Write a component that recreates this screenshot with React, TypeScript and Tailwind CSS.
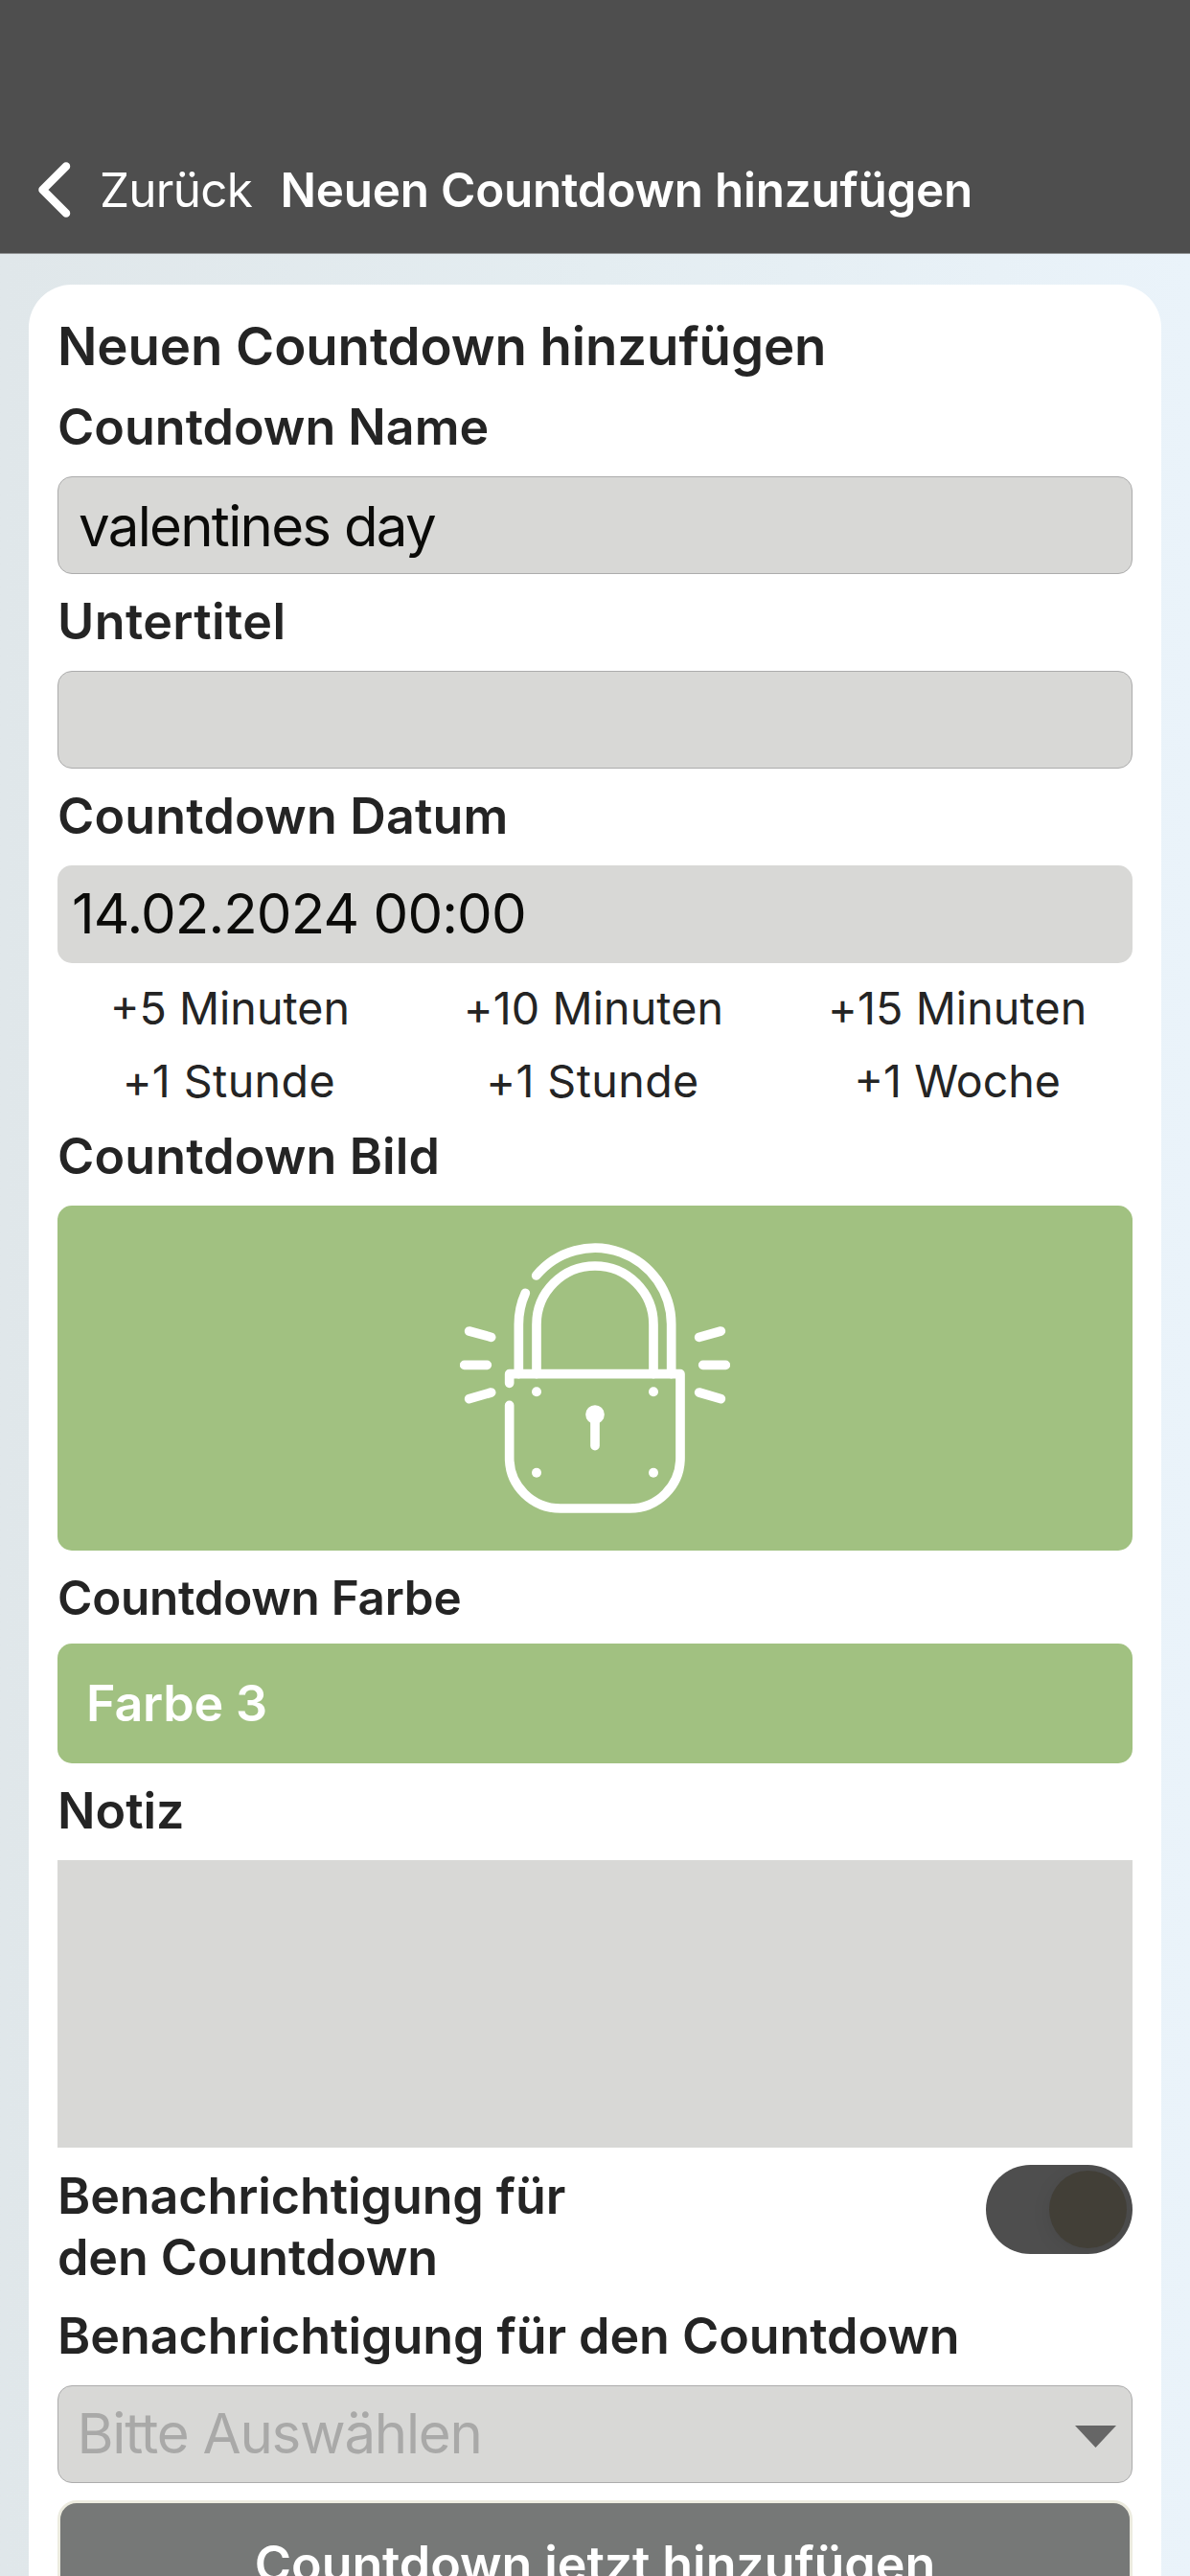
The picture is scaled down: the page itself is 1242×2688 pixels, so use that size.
import React, { useState } from 'react';

const quickSteps = [
  { label: '+5 Minuten', className: '' },
  { label: '+10 Minuten', className: 'tracking-[0.1px]' },
  { label: '+15 Minuten', className: 'tracking-[0.1px]' },
  { label: '+1 Stunde', className: 'tracking-[0.4px] pr-0.5' },
  { label: '+1 Stunde', className: 'tracking-[0.4px] pr-0.5' },
  { label: '+1 Woche', className: '' }
];

const FieldLabel: React.FC<{ children: React.ReactNode; className?: string }> = ({ children, className = '' }) => (
  <label className={`block mt-3.5 mb-[15px] text-[52px] leading-[72px] font-semibold ${className}`}>{children}</label>
);

const LockIcon: React.FC = () => (
  <svg
    viewBox="60 110 846 846"
    className="w-[282px] h-[282px]"
    fill="none"
    stroke="white"
    strokeWidth="29"
    strokeLinecap="round"
    strokeLinejoin="round"
  >
    {/* Shackle */}
    <path d="M722 520V365A239 239 0 0 0 299 212" />
    <path d="M265 267A239 239 0 0 0 244 365V520" />
    <path d="M300 520V365A183 183 0 0 1 666 365V520" />
    {/* Body */}
    <path d="M215 549V520H750V783A158 158 0 0 1 592 941H375A160 158 0 0 1 215 783V618" />
    {/* Rays */}
    <path d="M89 386L158 405M74 492H145M89 598L158 578" />
    <path d="M809 405L877 386M821 492H892M809 578L877 598" />
    {/* Keyhole and rivets */}
    <path d="M483 655V745" />
    <g fill="white" stroke="none">
      <circle cx="483" cy="647" r="29.5" />
      <circle cx="300" cy="576" r="15" />
      <circle cx="666" cy="576" r="15" />
      <circle cx="300" cy="829" r="15" />
      <circle cx="666" cy="829" r="15" />
    </g>
  </svg>
);

const App: React.FC = () => {
  const [name, setName] = useState('valentines day');
  const [subtitle, setSubtitle] = useState('');
  const [note, setNote] = useState('');
  const [notify, setNotify] = useState(true);

  return (
    <div className="h-[2688px] flex flex-col overflow-hidden bg-gradient-to-r from-[#e0e7ea] via-[#e4edf1] to-[#eaf3fa] font-['Inter','Liberation_Sans',sans-serif] text-[#242424]">
      {/* Header */}
      <header className="shrink-0 h-[265px] pt-[162px] pl-10 flex items-start bg-[#4e4e4e] border-b border-[#8f9192] text-white text-[49.4px] leading-[72px]">
        <button className="flex items-center w-[252.5px]">
          <svg viewBox="0 0 34 58" className="w-[34px] h-[58px] mr-[30px]" fill="none">
            <path d="M29 4.5L4.5 29L29 53.5" stroke="white" strokeWidth="8.5" strokeLinecap="round" strokeLinejoin="round" />
          </svg>
          <span className="tracking-[-0.7px]">Zurück</span>
        </button>
        <span className="font-semibold tracking-[-0.22px]">Neuen Countdown hinzufügen</span>
      </header>

      {/* Form card */}
      <main className="shrink-0 mt-8 mx-[30px] px-[30px] pt-[27px] pb-[30px] bg-white rounded-t-[45px]">
        <h1 className="text-[54.6px] leading-[74px] font-semibold tracking-[-0.1px] -mb-0.5">Neuen Countdown hinzufügen</h1>

        <FieldLabel>Countdown Name</FieldLabel>
        <input
          value={name}
          onChange={(e) => setName(e.target.value)}
          className="block w-full h-[102px] pl-[21px] pt-0.5 rounded-[15px] border border-[#acacac] bg-[#d8d8d6] text-[58.2px] tracking-[-1.73px] text-[#0b0b09] outline-none"
        />

        <FieldLabel className="tracking-[0.4px]">Untertitel</FieldLabel>
        <input
          value={subtitle}
          onChange={(e) => setSubtitle(e.target.value)}
          className="block w-full h-[102px] pl-[21px] rounded-[15px] border border-[#acacac] bg-[#d8d8d6] text-[58.2px] outline-none"
        />

        <FieldLabel className="tracking-[0.18px]">Countdown Datum</FieldLabel>
        <div className="h-[102px] pl-[15px] flex items-center rounded-[15px] bg-[#d8d8d6] text-[58.2px] tracking-[-0.88px] text-[#0b0b09]">
          14.02.2024 00:00
        </div>

        <div className="grid grid-cols-3 -ml-2.5 -mr-[7px] mt-[9px] -mb-[9px] text-center text-[46.6px] leading-[76px]">
          {quickSteps.map((step, index) => (
            <button key={index} className={step.className}>{step.label}</button>
          ))}
        </div>

        <FieldLabel className="tracking-[0.13px]">Countdown Bild</FieldLabel>
        <div className="h-[360px] flex items-center justify-center rounded-[15px] bg-[#a1c181]">
          <LockIcon />
        </div>

        <label className="block mt-[13px] mb-3 text-[49.4px] leading-[72px] font-semibold tracking-[-0.24px]">Countdown Farbe</label>
        <div className="h-[125px] pl-[30px] flex items-center rounded-[15px] bg-[#a1c181] text-[52px] font-semibold tracking-[-0.2px] text-white">
          Farbe 3
        </div>

        <FieldLabel>Notiz</FieldLabel>
        <textarea
          value={note}
          onChange={(e) => setNote(e.target.value)}
          className="block w-full h-[300px] resize-none bg-[#d8d8d6] outline-none"
        />

        {/* Notification toggle */}
        <div className="flex items-start justify-between mt-[18px]">
          <p className="w-[560px] mt-px text-[52px] leading-[64px] font-semibold tracking-[-0.1px]">Benachrichtigung für den Countdown</p>
          <button
            onClick={() => setNotify(!notify)}
            className={`w-[153px] h-[93px] p-1.5 flex overflow-hidden rounded-full bg-[#4e4e4e] ${notify ? 'justify-end' : 'justify-start'}`}
          >
            <span className="w-[81px] h-[81px] rounded-full bg-[#423f37] shadow-[0_4px_20px_rgba(0,0,0,0.08)]"></span>
          </button>
        </div>

        <FieldLabel className="tracking-[-0.06px]">Benachrichtigung für den Countdown</FieldLabel>
        <div className="h-[102px] pl-[19.5px] pr-4 flex items-center justify-between rounded-[15px] border border-[#acacac] bg-[#d8d8d6] text-[58.2px] tracking-[-1.25px] text-[#a9a9a8]">
          <span>Bitte Auswählen</span>
          <svg viewBox="0 0 43 23" className="w-[43px] h-[23px] mt-1" fill="#666666">
            <path d="M0 0H43L21.5 23Z" />
          </svg>
        </div>

        <button className="block w-full h-[133px] mt-[18px] rounded-[20px] border-[3px] border-[#ecebdf] bg-[#767877] text-[52px] font-semibold tracking-[-0.09px] text-white">
          Countdown jetzt hinzufügen
        </button>
      </main>
    </div>
  );
};

export default App;
